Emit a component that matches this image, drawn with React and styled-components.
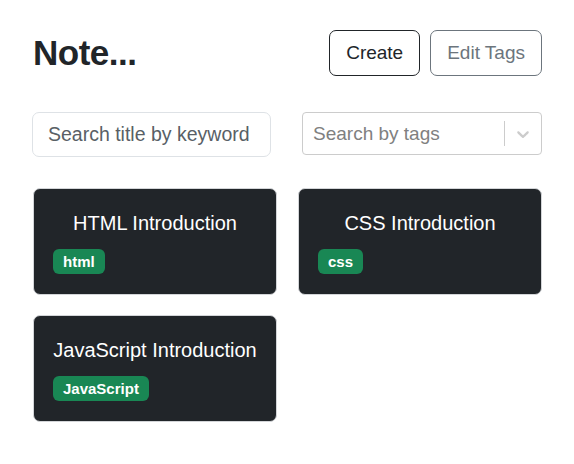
import styled, { createGlobalStyle } from 'styled-components';

const GlobalStyle = createGlobalStyle`
  body {
    margin: 0;
    padding: 0;
    background: #fff;
    font-family: 'Liberation Sans', Arial, sans-serif;
    color: #212529;
  }
`;

const notes = [
  { id: 1, title: 'HTML Introduction', tags: ['html'] },
  { id: 2, title: 'CSS Introduction', tags: ['css'] },
  { id: 3, title: 'JavaScript Introduction', tags: ['JavaScript'] },
];

const ChevronDown = () => (
  <svg width="20" height="20" viewBox="0 0 20 20" fill="#cccccc">
    <path d="M4.516 7.548c0.436-0.446 1.043-0.481 1.576 0l3.908 3.747 3.908-3.747c0.533-0.481 1.141-0.446 1.574 0 0.436 0.445 0.408 1.197 0 1.615-0.406 0.418-4.695 4.502-4.695 4.502-0.217 0.223-0.502 0.335-0.787 0.335s-0.57-0.112-0.789-0.335c0 0-4.287-4.084-4.695-4.502s-0.436-1.17 0-1.615z" />
  </svg>
);

const App = () => {
  return (
    <>
      <GlobalStyle />
      <Page>
        <Header>
          <Title>Note...</Title>
          <Actions>
            <Button>Create</Button>
            <Button $variant="secondary">Edit Tags</Button>
          </Actions>
        </Header>
        <Filters>
          <SearchInput placeholder="Search title by keyword" />
          <TagSelect>
            <Placeholder>Search by tags</Placeholder>
            <Indicators>
              <Separator />
              <ChevronWrap>
                <ChevronDown />
              </ChevronWrap>
            </Indicators>
          </TagSelect>
        </Filters>
        <Grid>
          {notes.map((note) => (
            <Card key={note.id}>
              <CardTitle>{note.title}</CardTitle>
              <Tags>
                {note.tags.map((tag) => (
                  <Badge key={tag}>{tag}</Badge>
                ))}
              </Tags>
            </Card>
          ))}
        </Grid>
      </Page>
    </>
  );
};

const Page = styled.div`
  width: 510px;
  padding: 30px 32px;
`;

const Header = styled.div`
  display: flex;
  align-items: center;
  justify-content: space-between;
`;

const Title = styled.h1`
  margin: 0 0 0 1px;
  font-size: 35px;
  font-weight: 700;
  letter-spacing: -0.5px;
`;

const Actions = styled.div`
  display: flex;
  gap: 10px;
`;

const Button = styled.button`
  height: 46px;
  padding: 0 16px;
  font-family: inherit;
  font-size: 19px;
  background: #fff;
  border-radius: 7px;
  border: 1px solid ${(p) => (p.$variant === 'secondary' ? '#6c757d' : '#212529')};
  color: ${(p) => (p.$variant === 'secondary' ? '#6c757d' : '#212529')};
  cursor: pointer;
`;

const Filters = styled.div`
  display: flex;
  justify-content: space-between;
  align-items: flex-start;
  margin-top: 36px;
`;

const SearchInput = styled.input`
  box-sizing: border-box;
  width: 239px;
  height: 45px;
  padding: 0 15px;
  border: 1px solid #dee2e6;
  border-radius: 7px;
  font-family: inherit;
  font-size: 19.5px;
  color: #212529;
  outline: none;

  &::placeholder {
    color: #595f66;
  }
`;

const TagSelect = styled.div`
  box-sizing: border-box;
  width: 240px;
  height: 43px;
  display: flex;
  align-items: center;
  border: 1px solid #cccccc;
  border-radius: 4px;
  background: #fff;
`;

const Placeholder = styled.div`
  flex: 1;
  padding-left: 10px;
  font-size: 19px;
  color: #808080;
`;

const Indicators = styled.div`
  display: flex;
  align-items: center;
  align-self: stretch;
`;

const Separator = styled.span`
  width: 1px;
  height: 25px;
  background: #cccccc;
`;

const ChevronWrap = styled.div`
  display: flex;
  padding: 8px;
`;

const Grid = styled.div`
  display: grid;
  grid-template-columns: 244px 244px;
  column-gap: 21px;
  row-gap: 20px;
  margin-top: 31px;
  margin-left: 1px;
`;

const Card = styled.div`
  box-sizing: border-box;
  height: 107px;
  padding: 19px 19px;
  background: #212529;
  border: 1px solid #d3d5d8;
  border-radius: 7px;
  color: #fff;
`;

const CardTitle = styled.div`
  font-size: 20px;
  line-height: 30px;
  text-align: center;
  white-space: nowrap;
`;

const Tags = styled.div`
  display: flex;
  gap: 6px;
  margin-top: 11px;
`;

const Badge = styled.span`
  display: inline-flex;
  align-items: center;
  height: 25px;
  padding: 0 10px;
  border-radius: 6px;
  background: #198754;
  color: #fff;
  font-size: 15px;
  font-weight: 700;
`;

export default App;
